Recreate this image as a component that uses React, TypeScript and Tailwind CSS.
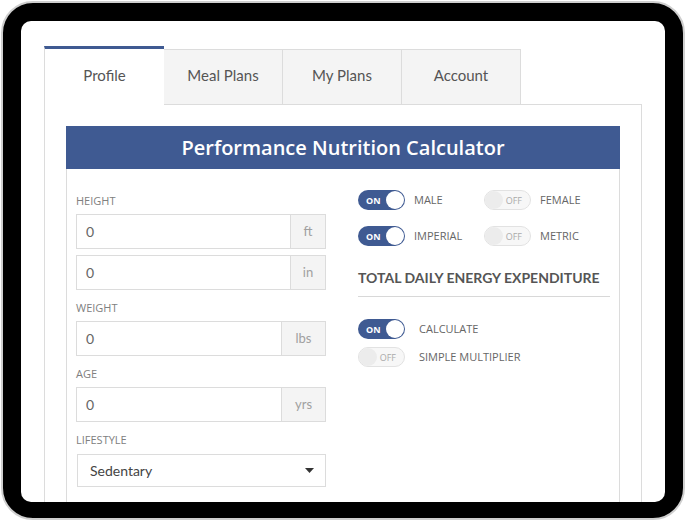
import React from "react";

const QS = { fontFamily: "Lato, 'Open Sans', sans-serif" };
const OS = { fontFamily: "'Open Sans', Arial, sans-serif" };

function Toggle({ on }: { on: boolean }) {
  if (on) {
    return (
      <div className="relative flex h-[20px] w-[47px] shrink-0 items-center rounded-full bg-[#3f5a92]">
        <span className="pl-[8px] text-[9px] font-bold leading-none text-white" style={OS}>ON</span>
        <span className="absolute right-[1px] top-[1px] h-[18px] w-[18px] rounded-full bg-white" />
      </div>
    );
  }
  return (
    <div className="relative flex h-[20px] w-[47px] shrink-0 items-center justify-end rounded-full border border-[#e2e2e2] bg-[#f7f7f7]">
      <span className="pr-[8px] text-[9px] leading-none text-[#aaa]" style={OS}>OFF</span>
      <span className="absolute left-[0px] top-[0px] h-[18px] w-[18px] rounded-full bg-[#ececec]" />
    </div>
  );
}

function Field({ unit, w }: { unit: string; w: string }) {
  return (
    <div className="flex h-[35px] w-[250px] border border-[#dcdcdc]">
      <div className="flex flex-1 items-center pl-[9px] text-[14px] text-[#666]" style={QS}>0</div>
      <div className={`flex ${w} items-center justify-center border-l border-[#dcdcdc] bg-[#f4f4f4] text-[13px] text-[#a0a0a0]`} style={QS}>
        {unit}
      </div>
    </div>
  );
}

function Label({ children, cls }: { children: React.ReactNode; cls: string }) {
  return (
    <div className={`h-[16px] text-[11px] leading-[16px] text-[#808080] ${cls}`} style={OS}>
      {children}
    </div>
  );
}

export default function App() {
  const tabs = ["Profile", "Meal Plans", "My Plans", "Account"];
  return (
    <div className="h-[523px] w-[687px] overflow-hidden bg-white p-[1px]">
      <div className="h-[519px] w-[684px] rounded-[32px] border-2 border-[#cfcfcf] bg-black px-[18px] pt-[18px]">
        <div className="h-[481px] w-[644px] overflow-hidden rounded-[10px] bg-white pl-[23px] pt-[25px]">
          {/* tabs */}
          <div className="flex items-end">
            {tabs.map((t, i) =>
              i === 0 ? (
                <div
                  key={t}
                  className="relative z-10 -mb-px flex h-[59px] w-[120px] items-center justify-center border-l border-t-[3px] border-l-[#dcdcdc] border-t-[#3f5a92] bg-white pb-[4px] text-[15px] text-[#555]"
                  style={QS}
                >
                  {t}
                </div>
              ) : (
                <div
                  key={t}
                  className="flex h-[55px] w-[120px] items-center justify-center border-l border-r border-t border-[#dcdcdc] bg-[#f4f4f4] pb-[3px] text-[15px] text-[#555] -ml-px first:ml-0"
                  style={QS}
                >
                  {t}
                </div>
              )
            )}
          </div>
          {/* panel */}
          <div className="h-[420px] w-[598px] border border-[#dcdcdc] p-[21px]">
            <div className="h-[400px] border border-[#dcdcdc]">
              <div className="-mx-px -mt-px flex h-[43px] items-center justify-center bg-[#3f5a92] text-[20px] font-semibold text-white" style={OS}>
                Performance Nutrition Calculator
              </div>
              <div className="grid grid-cols-[250px_252px] gap-x-[32px] px-[9px] pt-[21px]">
                {/* left column */}
                <div className="flex flex-col">
                  <Label cls="mt-[3px] mb-[5px]">HEIGHT</Label>
                  <Field unit="ft" w="w-[35px]" />
                  <div className="mt-[6px]">
                    <Field unit="in" w="w-[35px]" />
                  </div>
                  <Label cls="mt-[10px] mb-[5px]">WEIGHT</Label>
                  <Field unit="lbs" w="w-[44px]" />
                  <Label cls="mt-[10px] mb-[5px]">AGE</Label>
                  <Field unit="yrs" w="w-[44px]" />
                  <Label cls="mt-[10px] mb-[6px]">LIFESTYLE</Label>
                  <div className="ml-px flex h-[33px] w-[249px] items-center justify-between border border-[#dcdcdc] pl-[12px] pr-[11px] text-[14px] text-[#444]" style={QS}>
                    <span>Sedentary</span>
                    <svg width="9" height="5" viewBox="0 0 9 5">
                      <path d="M0 0 L9 0 L4.5 5 Z" fill="#333" />
                    </svg>
                  </div>
                </div>
                {/* right column */}
                <div className="flex flex-col">
                  <div className="flex items-center">
                    <div className="flex w-[126px] items-center">
                      <Toggle on />
                      <span className="ml-[9px] text-[11px] text-[#666]" style={OS}>MALE</span>
                    </div>
                    <div className="flex items-center">
                      <Toggle on={false} />
                      <span className="ml-[9px] text-[11px] text-[#666]" style={OS}>FEMALE</span>
                    </div>
                  </div>
                  <div className="mt-[16px] flex items-center">
                    <div className="flex w-[126px] items-center">
                      <Toggle on />
                      <span className="ml-[9px] text-[11px] text-[#666]" style={OS}>IMPERIAL</span>
                    </div>
                    <div className="flex items-center">
                      <Toggle on={false} />
                      <span className="ml-[9px] text-[11px] text-[#666]" style={OS}>METRIC</span>
                    </div>
                  </div>
                  <div className="mt-[21px] text-[14px] font-bold text-[#555]" style={QS}>
                    TOTAL DAILY ENERGY EXPENDITURE
                  </div>
                  <div className="mt-[8px] border-t border-[#d8d8d8]" />
                  <div className="mt-[22px] flex items-center">
                    <Toggle on />
                    <span className="ml-[14px] text-[11px] text-[#666]" style={OS}>CALCULATE</span>
                  </div>
                  <div className="mt-[8px] flex items-center">
                    <Toggle on={false} />
                    <span className="ml-[14px] text-[11px] text-[#666]" style={OS}>SIMPLE MULTIPLIER</span>
                  </div>
                </div>
              </div>
            </div>
          </div>
        </div>
      </div>
    </div>
  );
}
